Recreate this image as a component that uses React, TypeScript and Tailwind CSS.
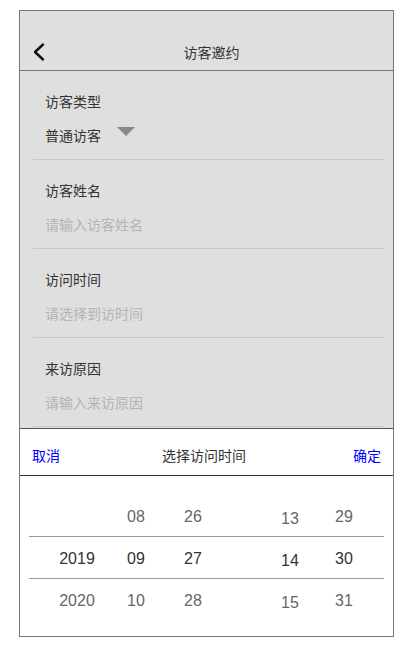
import React from 'react';

const FONT = { fontFamily: '"Noto Sans CJK SC", "Noto Sans", sans-serif' };
const NUM_FONT = { fontFamily: '"Liberation Sans", Arial, sans-serif' };

const fields = [
  { label: '访客类型', value: '普通访客', select: true },
  { label: '访客姓名', placeholder: '请输入访客姓名' },
  { label: '访问时间', placeholder: '请选择到访时间' },
  { label: '来访原因', placeholder: '请输入来访原因' },
];

// picker columns: margin, values, hour column sits a bit lower
const columns: { ml: string; values: string[]; nudge?: boolean }[] = [
  { ml: 'ml-[23px]', values: ['', '2019', '2020'] },
  { ml: 'ml-[9px]', values: ['08', '09', '10'] },
  { ml: 'ml-[7px]', values: ['26', '27', '28'] },
  { ml: 'ml-[47px]', values: ['13', '14', '15'], nudge: true },
  { ml: 'ml-[4px]', values: ['29', '30', '31'] },
];

function BackIcon() {
  return (
    <svg width="14" height="20" viewBox="0 0 14 20" fill="none">
      <path d="M11 2.5 L3 10 L11 17.5" stroke="#111" strokeWidth="2.4" strokeLinecap="round" strokeLinejoin="round" />
    </svg>
  );
}

export default function App() {
  return (
    <div className="min-h-screen bg-white pt-[10px]" style={FONT}>
      <div className="ml-[19px] w-[375px] h-[627px] border border-[#777] bg-[#dfdfdf] flex flex-col overflow-hidden">
        {/* Header */}
        <div className="h-[60px] shrink-0 border-b border-[#777] flex items-end">
          <div className="h-[36px] w-full flex items-center">
            <div className="w-[40px] pl-[12px] flex items-center">
              <BackIcon />
            </div>
            <div className="flex-1 text-center text-[14px] text-[#333]">访客邀约</div>
            <div className="w-[30px]" />
          </div>
        </div>

        {/* Form */}
        <div className="flex-1 ml-[13px] mr-[9px]">
          {fields.map((f) => (
            <div key={f.label} className="border-b border-[#c8c8c8] pt-5 pb-[14px] pl-3">
              <div className="h-5 leading-5 text-[14px] text-[#333]">{f.label}</div>
              <div className="mt-[14px] h-5 leading-5 text-[14px] flex items-center">
                {f.select ? (
                  <>
                    <span className="text-[#333]">{f.value}</span>
                    <svg className="ml-4 -mt-[7px]" width="18" height="10" viewBox="0 0 18 10">
                      <path d="M0 0 H18 L9 9 Z" fill="#888" />
                    </svg>
                  </>
                ) : (
                  <span className="text-[#b4b4b4]">{f.placeholder}</span>
                )}
              </div>
            </div>
          ))}
        </div>

        {/* Picker sheet */}
        <div className="h-[208px] shrink-0 bg-white border-t border-[#555] flex flex-col">
          <div className="h-[47px] shrink-0 border-b border-[#333] flex items-center justify-between pt-[7px] pl-3 pr-[12px] text-[14px]">
            <span className="text-[#0000ff]">取消</span>
            <span className="-ml-[5px] text-[#333]">选择访问时间</span>
            <span className="text-[#0000ff]">确定</span>
          </div>
          <div className="relative flex-1 mx-[9px] pt-[20px]" style={NUM_FONT}>
            <div className="absolute left-0 right-0 top-[60px] h-[43px] border-y border-[#999]" />
            <div className="flex">
              {columns.map((c, ci) => (
                <div key={ci} className={`${c.ml} w-[50px] flex flex-col`}>
                  {c.values.map((v, i) => (
                    <div
                      key={i}
                      className={`h-[42px] flex items-center justify-center text-[16px] ${c.nudge ? 'pt-[4px]' : ''} ${i === 1 ? 'text-[#333]' : 'text-[#666]'}`}
                    >
                      {v}
                    </div>
                  ))}
                </div>
              ))}
            </div>
          </div>
        </div>
      </div>
    </div>
  );
}
